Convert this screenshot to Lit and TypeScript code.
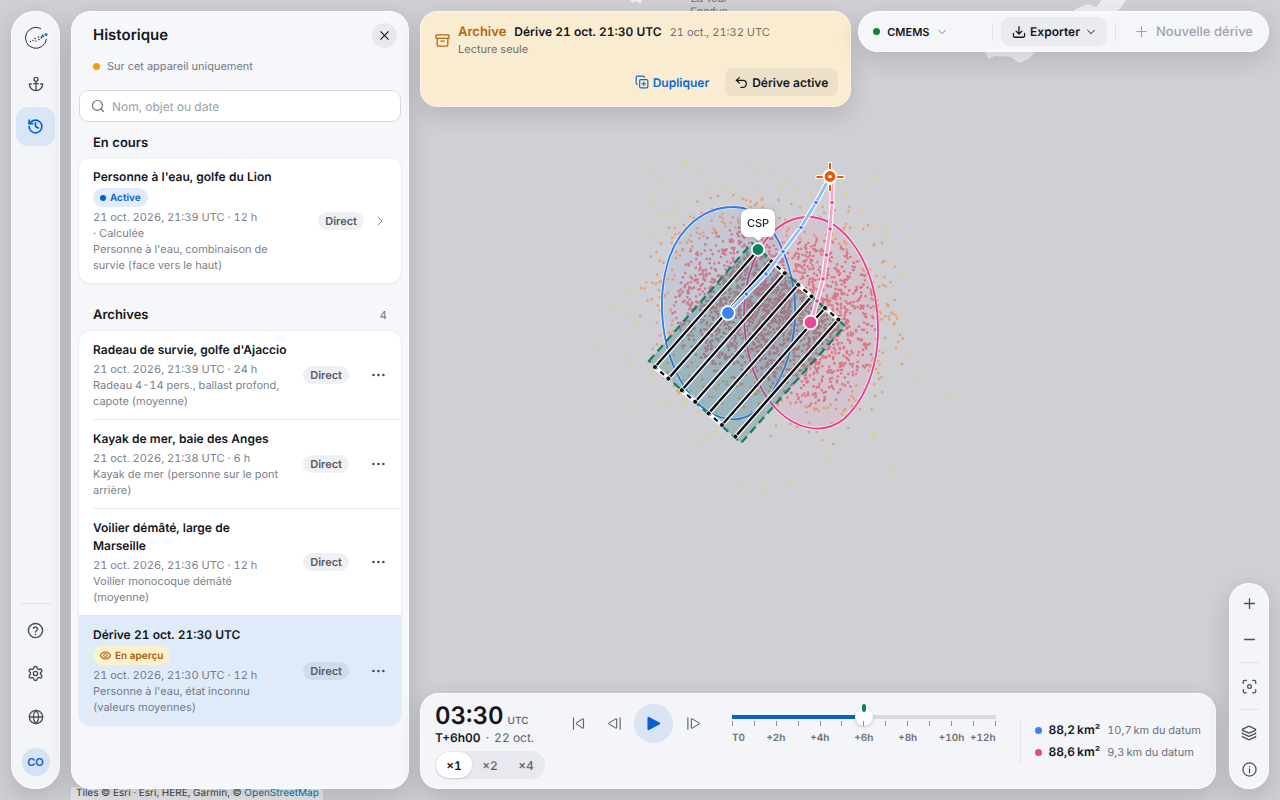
import { LitElement, html, css, svg, nothing } from "lit";
import { customElement, property, state } from "lit/decorators.js";
import { classMap } from "lit/directives/class-map.js";

const ICONS: Record<string, unknown> = {
  anchor: svg`<path d="M12 22V8M5 12H2a10 10 0 0 0 20 0h-3M8.5 11.500h7"/><circle cx="12" cy="5" r="3"/>`,
  history: svg`<path d="M3 12a9 9 0 1 0 9-9 9.750 9.750 0 0 0-6.740 2.740L3 8"/><path d="M3 3v5h5"/><path d="M12 7v5l4 2"/>`,
  help: svg`<circle cx="12" cy="12" r="10"/><path d="M9.100 9a3 3 0 0 1 5.800 1c0 2-2.900 2.500-2.900 4"/><path d="M12 17.500v.01"/>`,
  settings: svg`<path d="M9.671 4.136a2.340 2.340 0 0 1 4.659 0 2.340 2.340 0 0 0 3.319 1.915 2.340 2.340 0 0 1 2.330 4.033 2.340 2.340 0 0 0 0 3.831 2.340 2.340 0 0 1-2.330 4.033 2.340 2.340 0 0 0-3.319 1.915 2.340 2.340 0 0 1-4.659 0 2.340 2.340 0 0 0-3.320-1.915 2.340 2.340 0 0 1-2.330-4.033 2.340 2.340 0 0 0 0-3.831A2.340 2.340 0 0 1 6.350 6.051a2.340 2.340 0 0 0 3.319-1.915"/><circle cx="12" cy="12" r="3"/>`,
  globe: svg`<circle cx="12" cy="12" r="10"/><path d="M12 2a14.500 14.500 0 0 0 0 20 14.500 14.500 0 0 0 0-20M2 12h20"/>`,
  close: svg`<path d="M19 5 5 19M5 5l14 14"/>`,
  search: svg`<circle cx="11" cy="11" r="8.500"/><path d="m21.500 21.500-4.300-4.300"/>`,
  right: svg`<path d="m8 4 8 8-8 8"/>`,
  down: svg`<path d="m4 8 8 8 8-8"/>`,
  more: svg`<g fill="currentColor" stroke="none"><circle cx="2.500" cy="12" r="2.300"/><circle cx="11" cy="12" r="2.300"/><circle cx="19.500" cy="12" r="2.300"/></g>`,
  eye: svg`<path d="M1 12c2-4.700 6.200-7.500 11-7.500S21 7.300 23 12c-2 4.700-6.200 7.500-11 7.500S3 16.700 1 12"/><circle cx="12" cy="12" r="4"/>`,
  archive: svg`<rect x="1.500" y="3" width="21" height="5.500" rx="1"/><path d="M3.500 8.500V19a2 2 0 0 0 2 2h13a2 2 0 0 0 2-2V8.500M9.500 13h5"/>`,
  copy: svg`<path d="M15 12v6M12 15h6"/><rect x="8" y="8" width="14" height="14" rx="2"/><path d="M4 16c-1.100 0-2-.900-2-2V4c0-1.100.900-2 2-2h10c1.100 0 2 .900 2 2"/>`,
  undo: svg`<path d="M8 13 2.500 8 8 3"/><path d="M2.500 8h12a6.500 6.500 0 0 1 0 13H11"/>`,
  download: svg`<path d="M12 3v12M7 10.500l5 5 5-5M2.500 14.500V19a2 2 0 0 0 2 2h15a2 2 0 0 0 2-2v-4.500"/>`,
  plus: svg`<path d="M3 12h18M12 3v18"/>`,
  minus: svg`<path d="M3 12h18"/>`,
  focus: svg`<circle cx="12" cy="12" r="3"/><path d="M2 7V4.500A2.500 2.500 0 0 1 4.500 2H7M17 2h2.500A2.500 2.500 0 0 1 22 4.500V7M22 17v2.500a2.500 2.500 0 0 1-2.500 2.500H17M7 22H4.500A2.500 2.500 0 0 1 2 19.500V17"/>`,
  layers: svg`<path d="M12.830 2.180a2 2 0 0 0-1.660 0L2.600 6.080a1 1 0 0 0 0 1.830l8.580 3.910a2 2 0 0 0 1.660 0l8.580-3.900a1 1 0 0 0 0-1.830zM2 12a1 1 0 0 0 .580.910l8.600 3.910a2 2 0 0 0 1.650 0l8.580-3.900A1 1 0 0 0 22 12M2 17a1 1 0 0 0 .580.910l8.600 3.910a2 2 0 0 0 1.650 0l8.580-3.900A1 1 0 0 0 22 17"/>`,
  info: svg`<circle cx="12" cy="12" r="10.500"/><path d="M12 11v6M12 7.500v.01"/>`,
  start: svg`<path d="M4 3v18M20 5.500v13a1 1 0 0 1-1.500.900L9 13a1.200 1.200 0 0 1 0-2l9.500-6.400a1 1 0 0 1 1.500.900z"/>`,
  back: svg`<path d="M21 3v18M15.500 5.500v13a1 1 0 0 1-1.500.900L3.500 13a1.200 1.200 0 0 1 0-2L14 4.600a1 1 0 0 1 1.500.900z"/>`,
  forward: svg`<path d="M3 3v18M8.500 5.500v13a1 1 0 0 0 1.500.900L20.500 13a1.200 1.200 0 0 0 0-2L10 4.600a1 1 0 0 0-1.500.900z"/>`,
  play: svg`<path fill="currentColor" d="M4.500 3.500v17L20.500 12z"/>`,
};

const icon = (name: string, size = 16, stroke = 2) => html`<svg
  width=${size} height=${size} viewBox="0 0 24 24" fill="none" stroke="currentColor"
  stroke-width=${stroke} stroke-linecap="round" stroke-linejoin="round" aria-hidden="true"
>${ICONS[name]}</svg>`;

const base = css`
  * { box-sizing: border-box; }
  button, input, select {
    font: inherit; color: inherit; margin: 0; padding: 0; border: 0; background: none; text-rendering: inherit;
    font-variant-numeric: inherit;
  }
  button { display: inline-flex; align-items: center; justify-content: center; cursor: pointer; }
  svg { display: block; flex: none; }
  h1, h2, h3, p, ul { margin: 0; padding: 0; font-size: inherit; font-weight: inherit; }
  ul { list-style: none; }
`;

/* ---------- Map canvas ---------- */

type Pt = [number, number];
const TOP: Pt = [758, 250];
const BOTTOM: Pt = [655, 367];
const LEGS = 7;
const stepPt = (p: Pt, i: number): Pt => [p[0] + i * 13.4, p[1] + i * 11.6];
const BLUE_TRACK: Pt[] = [[830, 177], [816, 202.5], [801, 227.5], [783, 251.5], [766, 274], [746.5, 294], [728, 313]];
const PINK_TRACK: Pt[] = [[832, 177], [832, 202.5], [830, 229], [826.5, 255], [823, 279], [817, 301], [811, 323]];

function particles() {
  let seed = 90210;
  const rnd = () => {
    seed = (seed * 1664525 + 1013904223) >>> 0;
    return (seed + 1) / 4294967297;
  };
  const clouds = [
    { x: 738, y: 303, sx: 37, sy: 42 },
    { x: 812, y: 322, sx: 36, sy: 47 },
  ];
  const out = { red: "", orange: "", yellow: "" };
  for (let i = 0; i < 2500; i++) {
    const c = clouds[i % 2];
    const r = Math.sqrt(-2 * Math.log(rnd()));
    const a = rnd() * Math.PI * 2;
    const spread = i % 9 ? 1 : 1.3;
    const x = c.x + r * Math.cos(a) * c.sx * spread;
    const y = c.y + r * Math.sin(a) * c.sy * spread;
    const d = Math.min(...clouds.map((k) => Math.hypot((x - k.x) / k.sx, (y - k.y) / k.sy)));
    const key = d < 1.8 ? "red" : d < 2.7 ? "orange" : "yellow";
    out[key] += `M${x.toFixed(1)} ${y.toFixed(1)}h.01`;
  }
  return out;
}
const DOTS = particles();

@customElement("drift-map")
class DriftMap extends LitElement {
  static styles = css`
    :host { display: block; overflow: hidden; background: #d0cfd4; }
    svg { display: block; width: 100%; height: 100%; }
    .place { font: 11px "Liberation Sans", sans-serif; fill: #6d6d72; }
    .csp { font: 500 11px Inter, sans-serif; fill: #23262e; }
    .callout { filter: drop-shadow(0 1px 3px rgba(20, 24, 34, 0.2)); }
  `;

  private track(points: Pt[], line: string, dot: string) {
    const pts = points.map((p) => p.join(",")).join(" ");
    return svg`
      <polyline points=${pts} fill="none" stroke="#fff" stroke-width="5" stroke-linejoin="round"/>
      <polyline points=${pts} fill="none" stroke=${line} stroke-width="2.800" stroke-linejoin="round"/>
      ${points.slice(1, -1).map((p) => svg`<circle cx=${p[0]} cy=${p[1]} r="2.200" fill=${dot} stroke="#fff" stroke-width=".8"/>`)}`;
  }

  private pattern() {
    const out: unknown[] = [];
    for (let i = 0; i < LEGS - 1; i++) {
      const from = i % 2 ? TOP : BOTTOM;
      const [a, b] = [stepPt(from, i), stepPt(from, i + 1)];
      out.push(svg`
        <line x1=${a[0]} y1=${a[1]} x2=${b[0]} y2=${b[1]} stroke="#fff" stroke-width="4.500"/>
        <line x1=${a[0]} y1=${a[1]} x2=${b[0]} y2=${b[1]} stroke="#0b0f14" stroke-width="2.200" stroke-dasharray="5 4" stroke-dashoffset="2"/>`);
    }
    for (let i = 0; i < LEGS; i++) {
      const [a, b] = [stepPt(TOP, i), stepPt(BOTTOM, i)];
      out.push(svg`
        <line x1=${a[0]} y1=${a[1]} x2=${b[0]} y2=${b[1]} stroke="#fff" stroke-width="4.800"/>
        <line x1=${a[0]} y1=${a[1]} x2=${b[0]} y2=${b[1]} stroke="#0b0f14" stroke-width="2.400"/>
        ${[a, b].map((p) => svg`<circle cx=${p[0]} cy=${p[1]} r="2.500" fill="#0b0f14" stroke="#fff" stroke-width=".8"/>`)}`);
    }
    return out;
  }

  render() {
    return html`<svg viewBox="0 0 1280 800" preserveAspectRatio="xMidYMid slice" role="img" aria-label="Carte de dérive">
      <path fill="#eeeef0" d="M630 0l3 3 3-2 4 3 2-4zM1074 10l6-3 8-3 8 3 6-7h24l-6 9-9 5h-36zM984 48l4 11 7-3 16 1 8 6 10-4 6-7v-4z"/>
      <text class="place" x="709" y="2" text-anchor="middle">La Tour</text>
      <text class="place" x="709" y="15" text-anchor="middle">Fondue</text>

      <g fill="none" stroke-width="2.700" stroke-linecap="round">
        <path d=${DOTS.yellow} stroke="#efcb5b" opacity=".8"/>
        <path d=${DOTS.orange} stroke="#f0914f" opacity=".75"/>
        <path d=${DOTS.red} stroke="#e0505a" opacity=".66"/>
      </g>

      <g stroke-width="1.800">
        <path fill="#3b82f6" fill-opacity=".07" stroke="#fff" stroke-opacity=".6" stroke-width="3.600"
          d="M733 207C762 206 784 239 793 285C801 333 786 379 760 408C736 430 704 418 684 386C662 352 656 302 668 262C678 228 704 207 733 207z"/>
        <path fill="none" stroke="#2f7cf0"
          d="M733 207C762 206 784 239 793 285C801 333 786 379 760 408C736 430 704 418 684 386C662 352 656 302 668 262C678 228 704 207 733 207z"/>
        <path fill="#ec4899" fill-opacity=".07" stroke="#fff" stroke-opacity=".6" stroke-width="3.600"
          d="M808 217C840 217 866 252 875 296C884 345 873 392 844 419C821 437 790 429 768 399C746 368 738 318 749 275C759 240 781 217 808 217z"/>
        <path fill="none" stroke="#ea3d8d"
          d="M808 217C840 217 866 252 875 296C884 345 873 392 844 419C821 437 790 429 768 399C746 368 738 318 749 275C759 240 781 217 808 217z"/>
      </g>

      <polygon points="649,361 752,243 845,326 741,443" fill="#0f766e" fill-opacity=".24" stroke="#0f8060" stroke-width="2.200" stroke-dasharray="8 5"/>
      ${this.pattern()}
      ${this.track(BLUE_TRACK, "#8fbdf9", "#3b7ff0")}
      ${this.track(PINK_TRACK, "#f7a3cc", "#e2438f")}
      <circle cx="728" cy="313" r="6.800" fill="#3b82f6" stroke="#fff" stroke-width="1.800"/>
      <circle cx="810.500" cy="322.500" r="6.800" fill="#ec4899" stroke="#fff" stroke-width="1.800"/>
      <circle cx="758" cy="249.500" r="6.300" fill="#11805f" stroke="#fff" stroke-width="1.800"/>

      <g fill="none" stroke-linecap="butt">
        <path d="M830 162v7M830 184.500v7M815.500 177h7.500M837 177h7.500" stroke="#fff" stroke-width="4"/>
        <path d="M830 163v6M830 185v6M816.500 177h6.500M837 177h6.500" stroke="#e8590c" stroke-width="2"/>
        <circle cx="830" cy="176.500" r="6.400" fill="#e8590c" stroke="#fff" stroke-width="2"/>
        <circle cx="830" cy="176.500" r="1.800" fill="#fff"/>
      </g>

      <g class="callout">
        <path fill="#fff" d="M748 209h20a7 7 0 0 1 7 7v14a7 7 0 0 1-7 7h-6l-4 4-4-4h-6a7 7 0 0 1-7-7v-14a7 7 0 0 1 7-7z"/>
        <text class="csp" x="758" y="227" text-anchor="middle">CSP</text>
      </g>
    </svg>`;
  }
}

/* ---------- Navigation rail ---------- */

@customElement("nav-rail")
class NavRail extends LitElement {
  static styles = [base, css`
    :host {
      display: flex; flex-direction: column; align-items: center; width: 49px; padding: 7px 5px 13px;
      border-radius: 24px; background: #f3f5f8; color: #4a4f5c;
      box-shadow: 0 8px 24px rgba(20, 22, 34, 0.16), inset 0 0 0 1px rgba(255, 255, 255, 0.7);
    }
    .logo { padding: 8px; margin-bottom: 6px; color: #2a2f3a; }
    .item { width: 39px; height: 39px; border-radius: 12px; margin-bottom: 4px; }
    .item.on { background: #d9e6f5; color: #0560d2; }
    .rule { width: 30px; height: 1px; margin: auto 0 7px; background: #e0e2e8; }
    .avatar {
      width: 28px; height: 28px; margin-top: 8px; border-radius: 50%;
      background: #d5e3f5; color: #0560d2; font-size: 11px; font-weight: 600;
    }
  `];
  render() {
    return html`
      <a class="logo" aria-label="Accueil">
        <svg width="24" height="24" viewBox="0 0 24 24" fill="none">
          <path d="M17 2.600A10.500 10.500 0 1 0 22.400 13" stroke="currentColor" stroke-width="1"/>
          <g fill="currentColor">
            <circle cx="6.500" cy="15.500" r=".7"/><circle cx="9" cy="14.500" r=".7"/><circle cx="11" cy="12.500" r=".8"/>
            <circle cx="12" cy="15" r=".7"/><circle cx="14.500" cy="11" r=".8"/><circle cx="15" cy="13.500" r=".8"/>
            <circle cx="17.500" cy="11.500" r=".9"/><circle cx="18.500" cy="9.500" r=".9"/><circle cx="19.500" cy="10.500" r=".7"/>
          </g>
          <circle cx="22" cy="8.500" r="1.600" fill="#2272e0"/>
        </svg>
      </a>
      <button class="item" aria-label="Dérive">${icon("anchor")}</button>
      <button class="item on" aria-label="Historique">${icon("history", 17, 2.4)}</button>
      <div class="rule"></div>
      <button class="item" aria-label="Aide">${icon("help", 17)}</button>
      <button class="item" aria-label="Réglages">${icon("settings", 17)}</button>
      <button class="item" aria-label="Langue">${icon("globe")}</button>
      <button class="avatar" aria-label="Compte">CO</button>`;
  }
}

/* ---------- History panel ---------- */

interface Drift { title: string; meta: string; object: string; badge?: "active" | "preview"; }

const CURRENT: Drift = {
  title: "Personne à l'eau, golfe du Lion", meta: "21 oct. 2026, 21:39 UTC · 12 h\n· Calculée",
  object: "Personne à l'eau, combinaison de\nsurvie (face vers le haut)", badge: "active",
};
const ARCHIVES: Drift[] = [
  { title: "Radeau de survie, golfe d'Ajaccio", meta: "21 oct. 2026, 21:39 UTC · 24 h", object: "Radeau 4-14 pers., ballast profond,\ncapote (moyenne)" },
  { title: "Kayak de mer, baie des Anges", meta: "21 oct. 2026, 21:38 UTC · 6 h", object: "Kayak de mer (personne sur le pont\narrière)" },
  { title: "Voilier démâté, large de\nMarseille", meta: "21 oct. 2026, 21:36 UTC · 12 h", object: "Voilier monocoque démâté\n(moyenne)" },
  { title: "Dérive 21 oct. 21:30 UTC", meta: "21 oct. 2026, 21:30 UTC · 12 h", object: "Personne à l'eau, état inconnu\n(valeurs moyennes)", badge: "preview" },
];

@customElement("history-panel")
class HistoryPanel extends LitElement {
  static styles = [base, css`
    :host {
      display: flex; flex-direction: column; width: 338px; padding: 11px 8px; overflow: auto;
      border-radius: 20px; background: #f5f7fb; color: #14171f; font-size: 13px;
      box-shadow: 0 8px 24px rgba(20, 22, 34, 0.16), inset 0 0 0 1px rgba(255, 255, 255, 0.7);
    }
    header { display: flex; align-items: center; justify-content: space-between; padding: 0 4px 0 14px; }
    h1 { font-size: 15px; line-height: 26px; font-weight: 600; }
    .close { width: 25px; height: 25px; border-radius: 50%; background: #e7e9ed; }
    .local { display: flex; align-items: center; gap: 7px; padding: 10px 14px 0; font-size: 11px; line-height: 16px; color: #737884; }
    .local i { width: 7px; height: 7px; border-radius: 50%; background: #f79d0b; }
    .search {
      display: flex; align-items: center; gap: 7px; height: 32px; margin-top: 16px; padding: 0 11px;
      border: 1px solid #d6d9df; border-radius: 9px; background: #fff; color: #6b707d;
    }
    .search input { flex: 1; min-width: 0; outline: 0; font-size: 12px; color: #14171f; }
    .search input::placeholder { color: #9a9ea8; opacity: 1; }
    .group { display: flex; justify-content: space-between; align-items: center; padding: 13px 14px 7px; line-height: 16px; }
    .group + .card + .group { padding: 24px 14px 8px; }
    h2 { font-size: 13px; font-weight: 600; }
    .count { font-size: 11px; color: #737884; }
    .card { border-radius: 12px; background: #fff; box-shadow: 0 0 0 1px #eaecf1, 0 1px 2px rgba(20, 24, 34, 0.1); overflow: hidden; }
    .row { display: flex; align-items: center; gap: 10px; padding: 10px 3px 10px 14px; position: relative; }
    .row.go { padding-right: 15px; }
    .row + .row { border-top: 1px solid transparent; border-image: linear-gradient(90deg, transparent 14px, #eaecf0 14px) 1; }
    .row.sel { background: #e0ebf9; border-top-color: #d9e4f2; border-image: none; }
    .text { flex: 1; min-width: 0; display: flex; flex-direction: column; align-items: flex-start; gap: 2px; white-space: pre-line; }
    h3 { font-size: 12px; line-height: 18px; font-weight: 600; }
    .info { font-size: 11px; line-height: 16px; color: #7b808c; }
    .sel .info { color: #6f7a8b; }
    .badge { display: inline-flex; align-items: center; gap: 4px; height: 19px; padding: 0 7px; border-radius: 10px; font-size: 10px; font-weight: 600; }
    .badge.active { background: #e2ebfa; color: #0560d2; }
    .badge.active i { width: 6px; height: 6px; border-radius: 50%; background: currentColor; }
    .badge.preview { background: #fdf0cd; color: #ab5b08; }
    .pill { padding: 0 7px; border-radius: 9px; background: #eff0f3; color: #555a66; font-size: 11px; line-height: 18px; font-weight: 600; }
    .sel .pill { background: #d1dceb; }
    .menu { width: 39px; height: 39px; color: #4a4f5c; }
    .chev { color: #858a96; }
  `];

  private text(d: Drift) {
    return html`<div class="text"><h3>${d.title}</h3>${
      d.badge === "active" ? html`<span class="badge active"><i></i>Active</span>` : nothing
    }${
      d.badge === "preview" ? html`<span class="badge preview">${icon("eye", 11, 2.2)}En aperçu</span>` : nothing
    }<div class="info"><p>${d.meta}</p><p>${d.object}</p></div></div>
    <span class="pill">Direct</span>`;
  }

  render() {
    return html`
      <header><h1>Historique</h1><button class="close" aria-label="Fermer">${icon("close", 13)}</button></header>
      <p class="local"><i></i>Sur cet appareil uniquement</p>
      <label class="search">${icon("search", 14)}<input type="search" placeholder="Nom, objet ou date" aria-label="Rechercher" /></label>
      <div class="group"><h2>En cours</h2></div>
      <div class="card"><div class="row go">${this.text(CURRENT)}<span class="chev">${icon("right", 12)}</span></div></div>
      <div class="group"><h2>Archives</h2><span class="count">${ARCHIVES.length}</span></div>
      <ul class="card">
        ${ARCHIVES.map((d) => html`<li class=${classMap({ row: true, sel: d.badge === "preview" })}>
          ${this.text(d)}<button class="menu" aria-label="Actions">${icon("more", 14)}</button>
        </li>`)}
      </ul>`;
  }
}

/* ---------- Archive banner ---------- */

@customElement("archive-banner")
class ArchiveBanner extends LitElement {
  static styles = [base, css`
    :host {
      display: flex; flex-direction: column; gap: 11px; padding: 11px 12px 10px 14px; font-size: 12px; color: #14171f;
      border: 1px solid #fff6e6; border-radius: 17px; background: #faecd1;
      box-shadow: 0 8px 24px rgba(20, 22, 34, 0.14);
    }
    .head { display: flex; align-items: center; gap: 8px; color: #b3660c; }
    .line { display: flex; align-items: baseline; flex-wrap: wrap; gap: 0 8px; line-height: 18px; }
    strong { font-weight: 600; }
    .kind { font-size: 13px; }
    .name { color: #14171f; }
    .date, .sub { font-size: 11px; color: #706d6b; }
    .sub { line-height: 16px; }
    .actions { display: flex; justify-content: flex-end; gap: 6px; font-weight: 600; }
    .actions button { height: 28px; padding: 0 10px; gap: 4px; border-radius: 8px; }
    .dup { color: #0969d6; }
    .back { background: #ece0c9; }
  `];
  render() {
    return html`
      <div class="head">
        ${icon("archive", 15)}
        <div>
          <div class="line"><strong class="kind">Archive</strong><strong class="name">Dérive 21 oct. 21:30 UTC</strong><span class="date">21 oct., 21:32 UTC</span></div>
          <p class="sub">Lecture seule</p>
        </div>
      </div>
      <div class="actions">
        <button class="dup">${icon("copy", 14)}Dupliquer</button>
        <button class="back">${icon("undo", 13, 2.2)}Dérive active</button>
      </div>`;
  }
}

/* ---------- Top toolbar ---------- */

@customElement("top-toolbar")
class TopToolbar extends LitElement {
  static styles = [base, css`
    :host {
      display: flex; align-items: center; height: 41px; padding: 0 16px 0 15px; border-radius: 21px; font-size: 12px;
      font-weight: 600; color: #14171f; white-space: nowrap; background: rgba(247, 248, 251, 0.95);
      box-shadow: 0 8px 24px rgba(20, 22, 34, 0.14), inset 0 0 0 1px rgba(255, 255, 255, 0.7);
    }
    .source { flex: 1; display: flex; align-items: center; gap: 7px; font-size: 11px; }
    .source i { width: 7px; height: 7px; border-radius: 50%; background: #15803d; }
    .source select { appearance: none; outline: 0; }
    .source svg { color: #6b707d; pointer-events: none; }
    .rule { width: 1px; height: 18px; background: #e0e2e8; }
    .export { height: 29px; margin: 0 8px; padding: 0 11px; gap: 4px; border-radius: 9px; background: #e9ebef; }
    .export svg:last-child { margin-left: 2px; }
    .new { gap: 8px; padding-left: 19px; font-size: 13px; font-weight: 500; color: #a0a4af; }
  `];
  render() {
    return html`
      <label class="source"><i></i><select aria-label="Source de données"><option>CMEMS</option></select>${icon("down", 10)}</label>
      <span class="rule"></span>
      <button class="export">${icon("download", 14, 2.2)}Exporter${icon("down", 10, 2.4)}</button>
      <span class="rule"></span>
      <button class="new" disabled>${icon("plus", 13)}Nouvelle dérive</button>`;
  }
}

/* ---------- Player ---------- */

@customElement("drift-player")
class DriftPlayer extends LitElement {
  @state() private hour = 6;
  @state() private speed = 1;

  static styles = [base, css`
    :host {
      display: flex; align-items: center; padding: 10px 15px; border-radius: 19px; color: #14171f;
      background: #f3f5f8; box-shadow: 0 8px 24px rgba(20, 22, 34, 0.16), inset 0 0 0 1px rgba(255, 255, 255, 0.7);
    }
    .main { flex: 1; min-width: 0; }
    .deck { display: flex; align-items: flex-start; }
    .clock { width: 127px; }
    .time { display: flex; align-items: baseline; gap: 4px; font-size: 24px; line-height: 26px; font-weight: 600; }
    .time small { font-size: 10px; line-height: 11px; font-weight: 500; color: #5d626f; }
    .rel { display: flex; gap: 5px; font-size: 12px; line-height: 18px; color: #5d626f; }
    .rel b { font-weight: 600; color: #14171f; }
    .keys { display: flex; align-items: center; gap: 4px; margin-top: 1px; }
    .keys button { width: 32px; height: 32px; color: #5d626f; }
    .keys .play { width: 39px; height: 39px; border-radius: 50%; background: #d9e5f4; color: #0560d2; }
    .timeline { flex: 1; min-width: 0; margin: 5px 24px 0 23px; position: relative; }
    .slider {
      display: block; appearance: none; width: 100%; height: 18px; outline: 0;
      background: linear-gradient(90deg, #0a5fcf var(--at), #d9dbe0 var(--at)) center / 100% 4px no-repeat;
    }
    .slider::-webkit-slider-thumb {
      appearance: none; width: 18px; height: 18px; border-radius: 50%; background: #fff; box-shadow: 0 1px 3px rgba(20, 24, 34, 0.25);
    }
    .datum { position: absolute; top: -4px; left: 50%; width: 4px; height: 8px; margin-left: -2px; border-radius: 2px; background: #11805f; }
    .ticks, .hours { display: flex; justify-content: space-between; }
    .ticks { margin-top: -5px; pointer-events: none; }
    .ticks i { width: 1px; height: 5px; background: #8b909b; }
    .hours { margin-top: 4px; font-size: 10px; line-height: 16px; font-weight: 600; color: #6a6f7b; }
    .hours span { width: 0; display: flex; justify-content: center; }
    .hours span:first-child { justify-content: flex-start; }
    .hours span:last-child { justify-content: flex-end; }
    .speeds { display: flex; width: max-content; margin-top: 4px; padding: 1px; border-radius: 14px; background: #e8e9ee; font-size: 12px; font-weight: 500; color: #5d626f; }
    .speeds button { width: 36px; height: 26px; border-radius: 13px; }
    .speeds .on { background: #fff; color: #14171f; font-weight: 600; box-shadow: 0 1px 2px rgba(20, 24, 34, 0.16); }
    .zones { padding-left: 14px; border-left: 1px solid #e0e2e8; white-space: nowrap; }
    .zones li { display: flex; align-items: baseline; gap: 7px; font-size: 11px; line-height: 21px; color: #6b707d; }
    .zones i { width: 7px; height: 7px; border-radius: 50%; align-self: center; }
    .zones b { font-size: 12px; font-weight: 600; color: #14171f; }
    .blue { background: #3b82f6; }
    .pink { background: #e5488f; }
  `];

  render() {
    const at = (this.hour / 12) * 100;
    return html`
      <div class="main">
        <div class="deck">
          <div class="clock">
            <div class="time">03:30<small>UTC</small></div>
            <div class="rel"><b>T+6h00</b><span>·</span><span>22 oct.</span></div>
          </div>
          <div class="keys">
            <button aria-label="Début">${icon("start", 15, 1.8)}</button>
            <button aria-label="Reculer">${icon("back", 15, 1.8)}</button>
            <button class="play" aria-label="Lecture">${icon("play", 17)}</button>
            <button aria-label="Avancer">${icon("forward", 15, 1.8)}</button>
          </div>
          <div class="timeline">
            <input class="slider" type="range" min="0" max="12" .value=${String(this.hour)} style="--at:${at}%"
              aria-label="Échéance" @input=${(e: Event) => (this.hour = Number((e.target as HTMLInputElement).value))} />
            <span class="datum"></span>
            <div class="ticks">${Array.from({ length: 13 }, () => html`<i></i>`)}</div>
            <div class="hours">${["T0", "+2h", "+4h", "+6h", "+8h", "+10h", "+12h"].map((t) => html`<span>${t}</span>`)}</div>
          </div>
        </div>
        <div class="speeds">
          ${[1, 2, 4].map((s) => html`<button class=${classMap({ on: s === this.speed })} aria-pressed=${s === this.speed}
            @click=${() => (this.speed = s)}>×${s}</button>`)}
        </div>
      </div>
      <ul class="zones">
        <li><i class="blue"></i><b>88,2\u202fkm²</b>10,7\u202fkm du datum</li>
        <li><i class="pink"></i><b>88,6\u202fkm²</b>9,3\u202fkm du datum</li>
      </ul>`;
  }
}

/* ---------- Map tools ---------- */

@customElement("map-tools")
class MapTools extends LitElement {
  static styles = [base, css`
    :host {
      display: flex; flex-direction: column; align-items: center; width: 40px; padding: 2px 0; border-radius: 20px;
      background: #f3f5f8; color: #4a4f5c;
      box-shadow: 0 8px 24px rgba(20, 22, 34, 0.16), inset 0 0 0 1px rgba(255, 255, 255, 0.7);
    }
    button { width: 36px; height: 36px; }
    .rule { width: 20px; height: 1px; margin: 5px 0; background: #dfe1e6; }
  `];
  render() {
    return html`
      <button aria-label="Zoom avant">${icon("plus", 13, 2.4)}</button>
      <button aria-label="Zoom arrière">${icon("minus", 13, 2.4)}</button>
      <span class="rule"></span>
      <button aria-label="Recentrer">${icon("focus", 15)}</button>
      <span class="rule"></span>
      <button aria-label="Couches">${icon("layers")}</button>
      <button aria-label="Informations">${icon("info", 15)}</button>`;
  }
}

/* ---------- Shell ---------- */

@customElement("app-root")
class AppRoot extends LitElement {
  @property() lang = "fr";

  static styles = [base, css`
    :host {
      display: block; position: relative; height: 100vh; overflow: hidden; font-family: Inter, sans-serif;
      text-rendering: geometricPrecision; font-variant-numeric: tabular-nums;
    }
    .map { position: absolute; inset: 0; }
    .credits {
      position: absolute; left: 71px; bottom: 0; padding: 0 4px 0 5px; font-size: 10px; line-height: 13px;
      color: #3d4048; background: rgba(255, 255, 255, 0.5);
    }
    .credits a { color: #0078a8; text-decoration: none; }
    .shell { position: relative; display: flex; gap: 11px; height: 100%; padding: 11px; pointer-events: none; }
    .shell > nav-rail, .shell > history-panel, .bar > * { pointer-events: auto; }
    .stage { flex: 1; min-width: 0; display: flex; flex-direction: column; justify-content: space-between; }
    .bar { display: grid; grid-template-columns: 1.05fr 1fr; gap: 7px; align-items: start; }
    .bar.low { display: flex; gap: 13px; align-items: flex-end; }
    .bar drift-player { flex: 1; min-width: 0; }
  `];

  render() {
    return html`
      <drift-map class="map"></drift-map>
      <div class="credits">Tiles © Esri · Esri, HERE, Garmin, © <a href="#osm">OpenStreetMap</a></div>
      <div class="shell">
        <nav-rail></nav-rail>
        <history-panel></history-panel>
        <main class="stage">
          <div class="bar"><archive-banner></archive-banner><top-toolbar></top-toolbar></div>
          <div class="bar low"><drift-player></drift-player><map-tools></map-tools></div>
        </main>
      </div>`;
  }
}
